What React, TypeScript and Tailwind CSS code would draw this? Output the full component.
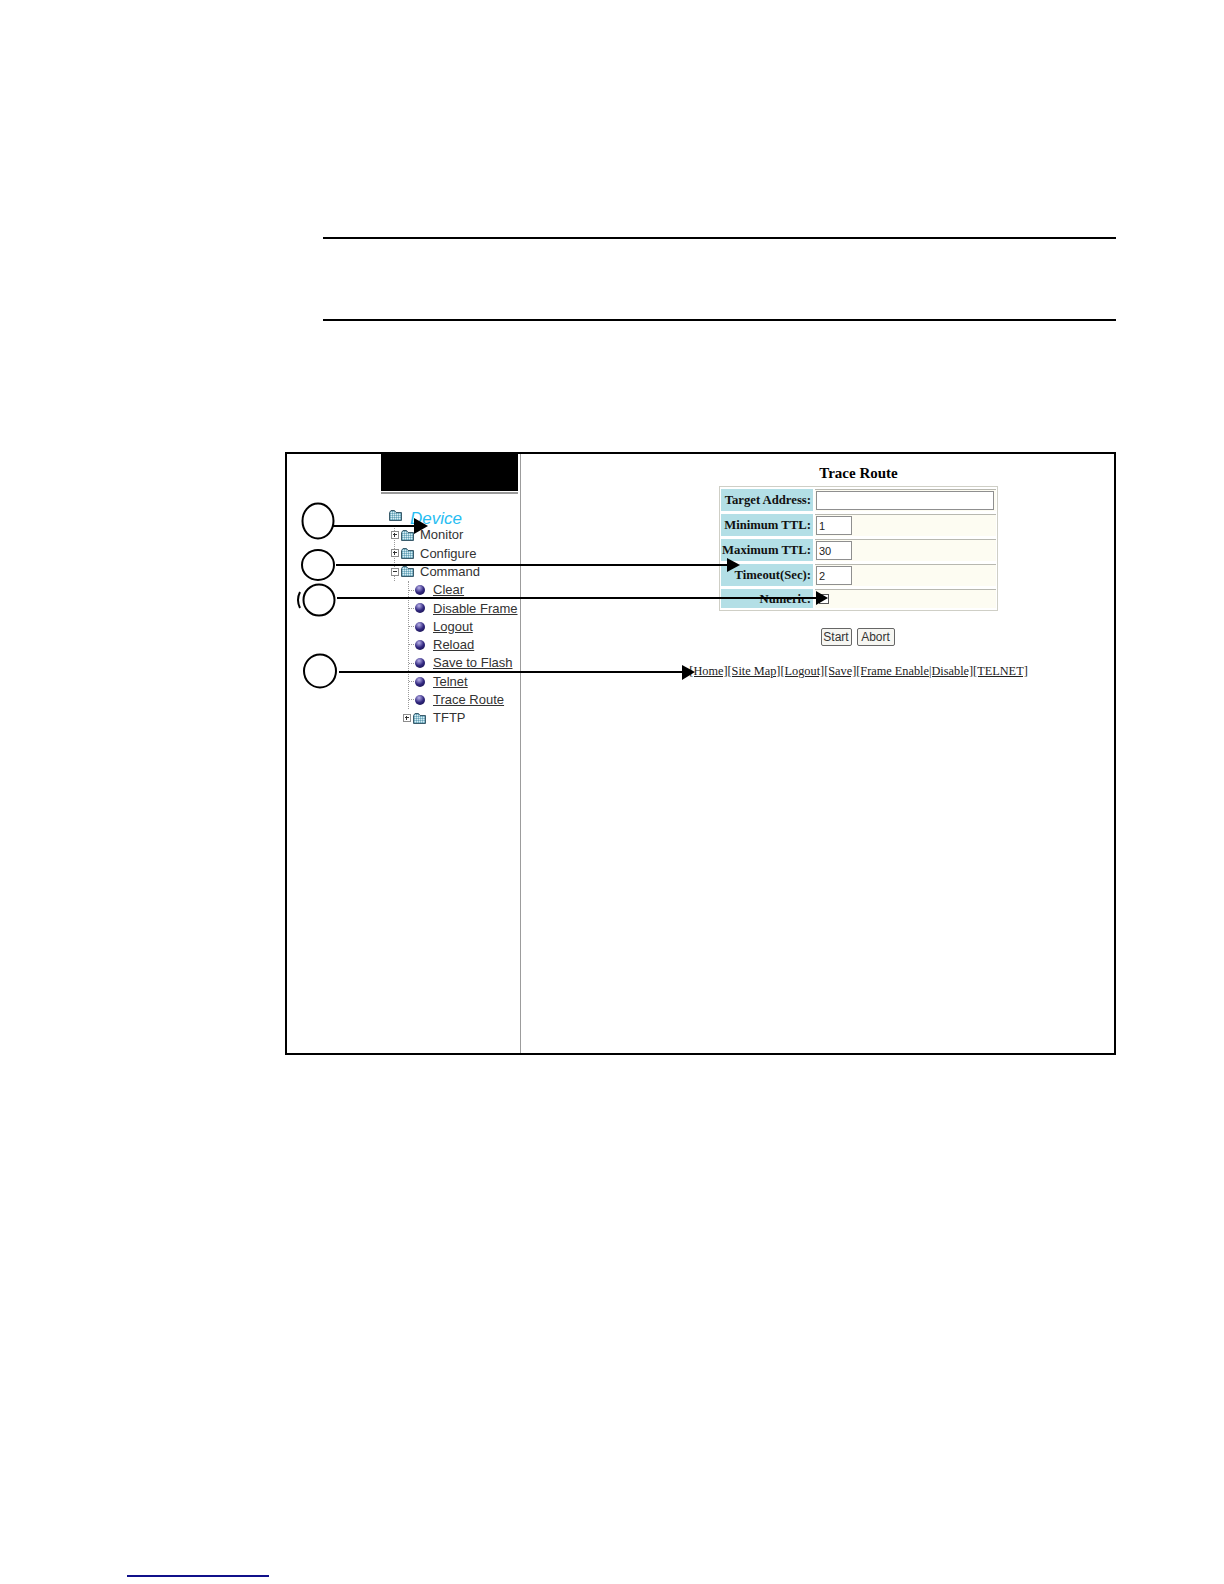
import React from 'react';

const sans = "font-['Liberation_Sans',sans-serif]";
const serif = "font-['Liberation_Serif',serif]";

function FolderIcon() {
  return (
    <svg width="13" height="11" viewBox="0 0 13 11" className="shrink-0">
      <defs>
        <pattern id="dither" width="2" height="2" patternUnits="userSpaceOnUse">
          <rect width="2" height="2" fill="#8cc2d4" />
          <rect width="1" height="1" fill="#dcecf1" />
          <rect x="1" y="1" width="1" height="1" fill="#6a9fb2" />
        </pattern>
      </defs>
      <path d="M0.5 2.5 L2 0.5 H5.5 L7 2.5 H12.5 V10.5 H0.5 Z" fill="url(#dither)" stroke="#3b5c6c" strokeWidth="1" />
    </svg>
  );
}

function PlusBox({ open }: { open?: boolean }) {
  return (
    <span className="relative shrink-0 w-[8px] h-[8px] border border-[#8d8d8d] bg-white">
      <span className="absolute left-[1px] top-[2px] w-[4px] h-[1px] bg-[#333]" />
      {!open && <span className="absolute left-[2px] top-[1px] w-[1px] h-[4px] bg-[#333]" />}
    </span>
  );
}

function FolderRow({ label, open, gap }: { label: string; open?: boolean; gap: string }) {
  return (
    <div className="flex items-center h-[18.3px]">
      <PlusBox open={open} />
      <span className="ml-[2px]"><FolderIcon /></span>
      <span className={`${gap} text-[13px] text-[#333] ${sans}`}>{label}</span>
    </div>
  );
}

function LeafRow({ label }: { label: string }) {
  return (
    <div className="flex items-center h-[18.3px]">
      <span className="w-[5px] border-t border-dotted border-[#9a9a9a]" />
      <span className="ml-[1px] w-[10px] h-[10px] rounded-full bg-[radial-gradient(circle_at_40%_28%,#b9b2ea,#322880_50%,#0e0a3c)]" />
      <a className={`ml-[8px] whitespace-nowrap text-[13px] text-[#333] underline ${sans}`}>{label}</a>
    </div>
  );
}

function FormRow({ label, h, children }: { label: string; h: string; children: React.ReactNode }) {
  return (
    <div className={`flex gap-[2px] ${h}`}>
      <div className={`w-[92px] flex items-center justify-end pr-[2px] pt-[2px] bg-[#b3dfe6] text-[12.7px] font-bold text-[#111] whitespace-nowrap ${serif}`}>
        {label}
      </div>
      <div className="flex-1 flex items-center bg-[#fdfcf2] border-t border-[#b8b8b0]">{children}</div>
    </div>
  );
}

function TextBox({ value, wide }: { value: string; wide?: boolean }) {
  return (
    <input
      readOnly
      value={value}
      className={`${wide ? 'w-[178px]' : 'w-[36px]'} ml-[1px] h-[19px] px-[2px] bg-white border border-[#8f8f8f] text-[11px] text-[#222] ${sans}`}
    />
  );
}

export default function App() {
  const leaves = ['Clear', 'Disable Frame', 'Logout', 'Reload', 'Save to Flash', 'Telnet', 'Trace Route'];
  return (
    <div className="relative w-[1224px] h-[1584px] bg-white pt-[237px]">
      <div className="ml-[323px] w-[793px] h-[84px] border-y-2 border-black" />

      <div className="ml-[285px] mt-[131px] w-[831px] h-[603px] flex border-2 border-black">
        <div className="w-[234px] shrink-0 border-r border-[#9c9c9c] overflow-hidden">
          <div className="ml-[94px] w-[137px] h-[37px] bg-black" />
          <div className="ml-[94px] w-[137px] h-[2px] mt-[1px] bg-[#9a9a9a]" />

          <div className="mt-[10px] ml-[102px] flex items-center h-[22px]">
            <FolderIcon />
            <span className={`ml-[8px] pt-[7px] text-[17px] italic text-[#27bdf2] ${sans}`}>Device</span>
          </div>

          <div className="ml-[104px]">
            <div className="ml-[3px] border-l border-dotted border-[#9a9a9a]">
              <div className="-ml-[4px]">
                <FolderRow label="Monitor" gap="ml-[6px]" />
                <FolderRow label="Configure" gap="ml-[6px]" />
                <FolderRow label="Command" gap="ml-[6px]" open />
              </div>
            </div>
            <div className="ml-[17px] border-l border-dotted border-[#9a9a9a]">
              {leaves.map((item) => (
                <LeafRow key={item} label={item} />
              ))}
            </div>
            <div className="ml-[12px]">
              <FolderRow label="TFTP" gap="ml-[7px]" />
            </div>
          </div>
        </div>

        <div className="flex-1">
          <div className="ml-[169px] w-[337px] pt-[10px] flex flex-col items-center">
            <div className={`h-[18px] leading-[18px] text-[15px] font-bold text-black ${serif}`}>Trace Route</div>

            <div className="mt-[4px] w-[279px] px-[1px] py-[2px] border border-[#cfcfc6] flex flex-col gap-[3px]">
              <FormRow label="Target Address:" h="h-[22px]"><TextBox value="" wide /></FormRow>
              <FormRow label="Minimum TTL:" h="h-[22px]"><TextBox value="1" /></FormRow>
              <FormRow label="Maximum TTL:" h="h-[22px]"><TextBox value="30" /></FormRow>
              <FormRow label="Timeout(Sec):" h="h-[22px]"><TextBox value="2" /></FormRow>
              <FormRow label="Numeric:" h="h-[19px]">
                <span className="ml-[4px] w-[10px] h-[10px] border border-[#555] bg-white" />
              </FormRow>
            </div>

            <div className="mt-[17px] mr-[2px] flex gap-[5px]">
              <button className={`w-[31px] h-[18px] border border-[#666] rounded-[2px] bg-[#f6f6f2] text-[12px] leading-none text-[#333] ${sans}`}>Start</button>
              <button className={`w-[38px] h-[18px] border border-[#666] rounded-[2px] bg-[#f6f6f2] text-[12px] leading-none text-[#333] ${sans}`}>Abort</button>
            </div>

            <div className={`mt-[17px] h-[16px] leading-[16px] whitespace-nowrap text-[12.3px] text-[#222] underline ${serif}`}>
              [Home][Site Map][Logout][Save][Frame Enable|Disable][TELNET]
            </div>
          </div>
        </div>
      </div>

      <div className="ml-[127px] mt-[520px] w-[142px] h-[2px] bg-[#10108a]" />

      {/* callouts sit over the screenshot, page coordinates */}
      <svg className="absolute left-0 top-0 w-[1224px] h-[1584px] pointer-events-none" viewBox="0 0 1224 1584">
        <g fill="none" stroke="#000" strokeWidth="2">
          <ellipse cx="318" cy="521" rx="15.5" ry="17.5" />
          <ellipse cx="318" cy="565" rx="16" ry="15" />
          <ellipse cx="319" cy="600" rx="15.5" ry="15.5" />
          <path d="M300 592 Q296 600 300 608" />
          <ellipse cx="320" cy="671" rx="16" ry="16.5" />
        </g>
        <g stroke="#000" strokeWidth="2">
          <path d="M333 526 H416" />
          <path d="M336 565 H730" />
          <path d="M337 598 H818" />
          <path d="M339 672 H684" />
        </g>
        <path d="M414 518 L428 526 L414 534 Z" />
        <path d="M727 558 L740 565 L727 572 Z" />
        <path d="M816 591 L828 598 L816 605 Z" />
        <path d="M682 665 L695 672 L682 680 Z" />
      </svg>
    </div>
  );
}
